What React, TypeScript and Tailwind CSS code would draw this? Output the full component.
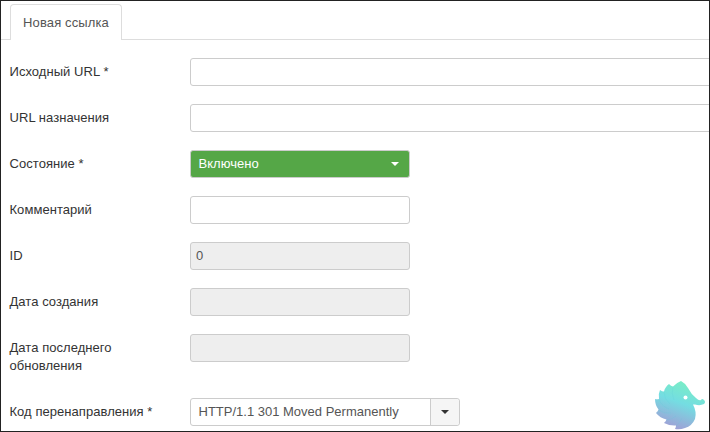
const fieldBase = "h-[28px] rounded-[3px] border border-[#ccc] shrink-0";

function Row({ label, children }: { label: React.ReactNode; children: React.ReactNode }) {
  return (
    <div className="flex mb-[18px]">
      <label className="w-[160px] mr-[20px] shrink-0 pt-[5px] pb-[5px] text-[13px] leading-[18px] tracking-[0.05px] text-[#333] -ml-[0.5px]">{label}</label>
      {children}
    </div>
  );
}

function Caret({ className }: { className: string }) {
  return <span className={"w-0 h-0 border-x-[4px] border-x-transparent border-t-[4px] " + className} />;
}

function Logo() {
  return (
    <svg width="58" height="55" viewBox="0 0 58 55" className="absolute left-[650px] top-[376px]">
      <defs>
        <linearGradient id="hog" x1="0.75" y1="0.05" x2="0.4" y2="1">
          <stop offset="0" stopColor="#7aeec4" />
          <stop offset="0.45" stopColor="#74dde2" />
          <stop offset="1" stopColor="#a09fd6" />
        </linearGradient>
      </defs>
      <path
        fill="url(#hog)"
        d="M31 5 Q35 7 38 12 Q41 18 46 22 Q49 25 51 24 Q52 22 54 24 Q56 26 54 28 Q50 30 45 28.5 L43 28.5 Q47 36 45 43 Q42 50 35 52 Q30 54 25 53 Q26 51 26 49.5 Q20 50 14 47 Q16 45 16.5 43.5 Q10 42 6 37 Q8 35 8.5 33.5 Q5 29 5 23 Q7 23.5 9 23 Q8 18 10 14 Q12 15.5 14 15.5 Q15 11 19 8 Q21 10 23 10.5 Q26 7 31 5 Z"
      />
      <g fill="none" stroke="#5ccfd6" strokeOpacity="0.2" strokeWidth="1">
        <path d="M23 11 Q21 17 24 24" />
        <path d="M14 16 Q14 23 20 28" />
        <path d="M9 23 Q11 30 19 33" />
        <path d="M9 34 Q14 38 21 37" />
        <path d="M16 44 Q21 44 26 40" />
        <path d="M26 50 Q30 47 32 42" />
      </g>
      <circle cx="35.5" cy="21.5" r="2" fill="#fff" />
    </svg>
  );
}

export default function App() {
  return (
    <div className="relative w-[710px] h-[432px] overflow-hidden bg-white font-['Liberation_Sans',sans-serif]">
      <div className="h-[40px] pl-[10px] pt-[4px] border-b border-[#ddd]">
        <div className="w-[112px] h-[36px] flex items-center justify-center bg-white border border-b-0 border-[#ddd] rounded-t-[4px] text-[13px] tracking-[0.12px] text-[#555]">
          Новая ссылка
        </div>
      </div>
      <div className="pl-[10px] pt-[18px] w-[730px]">
        <Row label="Исходный URL *">
          <div className={fieldBase + " w-[530px] bg-white"} />
        </Row>
        <Row label="URL назначения">
          <div className={fieldBase + " w-[530px] bg-white"} />
        </Row>
        <Row label="Состояние *">
          <div className="h-[28px] w-[220px] rounded-[3px] border border-[#ccc] bg-[#55a747] flex items-center justify-between pl-[8px] pr-[10px] text-[13px] tracking-[0.05px] text-white">
            Включено
            <Caret className="border-t-white" />
          </div>
        </Row>
        <Row label="Комментарий">
          <div className={fieldBase + " w-[220px] bg-white"} />
        </Row>
        <Row label="ID">
          <div className={fieldBase + " w-[220px] bg-[#eee] flex items-center pl-[5.5px] text-[13px] text-[#555]"}>0</div>
        </Row>
        <Row label="Дата создания">
          <div className={fieldBase + " w-[220px] bg-[#eee]"} />
        </Row>
        <Row label="Дата последнего обновления">
          <div className={fieldBase + " w-[220px] bg-[#eee]"} />
        </Row>
        <Row label="Код перенаправления *">
          <div className={fieldBase + " w-[270px] bg-white flex text-[13px] text-[#555]"}>
            <div className="flex-1 flex items-center pl-[8px]">HTTP/1.1 301 Moved Permanently</div>
            <div className="w-[29px] bg-[#f5f5f5] border-l border-[#ccc] rounded-r-[3px] flex items-center justify-center">
              <Caret className="border-t-[#333]" />
            </div>
          </div>
        </Row>
      </div>
      <Logo />
      <div className="absolute inset-0 border border-[#222] pointer-events-none" />
    </div>
  );
}
